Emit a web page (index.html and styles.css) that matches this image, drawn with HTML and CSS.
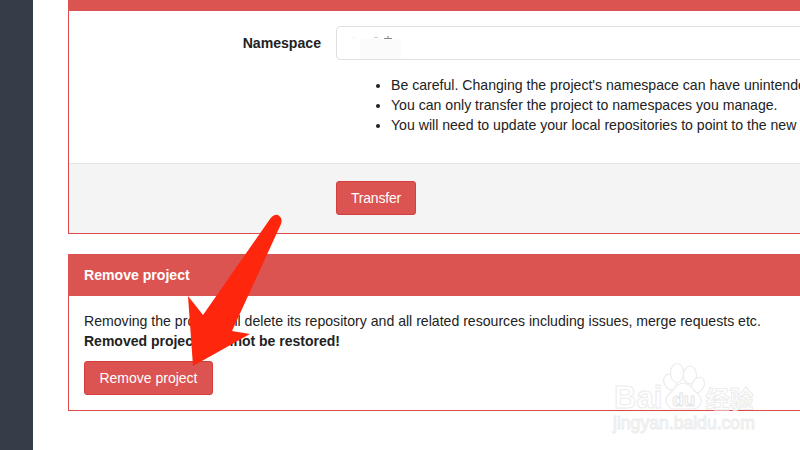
FILE: index.html
```html
<!DOCTYPE html>
<html lang="en">
<head>
<meta charset="utf-8">
<title>Remove project</title>
<link rel="stylesheet" href="styles.css">
</head>
<body>
<div class="page">
  <aside class="sidebar"></aside>
  <main class="content">
    <section class="panel transfer">
      <div class="panel-head stub"></div>
      <div class="form-row">
        <label class="ns-label">Namespace</label>
        <div class="ns-field">
          <div class="ns-input"><span class="smudge"></span></div>
          <ul class="notes">
            <li>Be careful. Changing the project's namespace can have unintended side effects.</li>
            <li>You can only transfer the project to namespaces you manage.</li>
            <li>You will need to update your local repositories to point to the new location.</li>
          </ul>
        </div>
      </div>
      <div class="actions">
        <button class="btn btn-transfer">Transfer</button>
      </div>
    </section>
    <section class="panel remove">
      <div class="panel-head">Remove project</div>
      <div class="panel-body">
        <p class="msg">Removing the project will delete its repository and all related resources including issues, merge requests etc.</p>
        <p class="msg"><strong class="warn">Removed projects cannot be restored!</strong></p>
        <button class="btn btn-remove">Remove project</button>
      </div>
    </section>
  </main>
</div>
<div class="watermark">
  <svg class="paw" width="50" height="50" viewBox="0 0 50 50" aria-hidden="true">
    <g fill="#fff" stroke="#ececec" stroke-width="1.2">
      <ellipse cx="10" cy="20" rx="6" ry="8" transform="rotate(-25 10 20)"/>
      <ellipse cx="17" cy="11" rx="6.5" ry="9.5"/>
      <ellipse cx="30" cy="13" rx="6.5" ry="9"/>
      <ellipse cx="38" cy="23" rx="6" ry="8" transform="rotate(25 38 23)"/>
      <path d="M23 21 C16 21 14 28 9 32 C3 37 7 47 15 47 L32 47 C41 47 44 38 38 32 C33 28 30 21 23 21 Z"/>
    </g>
  </svg>
  <div class="wm-main"><span>Bai</span><span class="wm-du">du</span><span class="wm-cn">经验</span></div>
  <div class="wm-url">jingyan.baidu.com</div>
</div>
<svg class="arrow" width="800" height="450" viewBox="0 0 800 450" aria-hidden="true">
  <path fill="#fe260c" d="M188 296 L203 315 L270 219 Q274 214 278 215 Q283 218 281 224 L232 331 L250 334 L193 366 Z"/>
</svg>
</body>
</html>
```

FILE: styles.css
```css
* { box-sizing: border-box; }
html, body {
  margin: 0;
  height: 100%;
  overflow: hidden;
  background: #fff;
  font-family: "Liberation Sans", Arial, sans-serif;
  font-size: 14.1px;
  color: #222;
}
.page { display: flex; height: 450px; width: 800px; overflow: hidden; }
.sidebar { flex: 0 0 33px; background: #353d48; }
.content { flex: 0 0 1000px; padding-left: 35px; }
.panel { border: 1px solid #e0494a; border-top: 0; width: 965px; }
.panel-head {
  background: #db5451;
  color: #fff;
  font-weight: 700;
  height: 42px;
  line-height: 42px;
  padding-left: 16px;
  margin-left: -1px;
  margin-right: -1px;
}
.panel-head.stub { height: 11px; }
.form-row { display: flex; padding-top: 15px; height: 152px; }
.ns-label {
  flex: 0 0 252px;
  text-align: right;
  font-weight: 700;
  line-height: 34px;
}
.ns-field { margin-left: 15px; flex: 1; }
.ns-input {
  height: 34px;
  border: 1px solid #e0e0e0;
  border-radius: 4px;
  background-color: #fff;
  background-image:
    linear-gradient(#ddd, #ddd),
    linear-gradient(#ccc, #ccc),
    linear-gradient(#8a8a8a, #8a8a8a),
    linear-gradient(#bbb, #bbb);
  background-repeat: no-repeat;
  background-size: 1px 1px, 4px 1px, 8px 1px, 2px 2px;
  background-position: 16px 10px, 37px 10px, 47px 11px, 50px 9px;
  display: flex;
  align-items: flex-end;
  padding-left: 23px;
}
.smudge {
  width: 41px;
  height: 20px;
  background: #fbfbfb;
}
.notes { margin: 15px 0 0; padding-left: 55px; line-height: 20px; white-space: nowrap; }
.actions {
  background: #f4f4f4;
  border-top: 1px solid #e5e5e5;
  height: 70px;
  padding: 17px 0 0 267px;
}
.btn {
  font: 14px "Liberation Sans", Arial, sans-serif;
  color: #fff;
  background: #db5451;
  border: 1px solid #d43f3d;
  border-radius: 3px;
  height: 34px;
  padding: 0;
}
.btn-transfer { width: 80px; letter-spacing: -0.2px; }
.remove { margin-top: 20px; height: 157px; }
.panel-body { padding: 15px 15px 0; }
.msg { margin: 0; line-height: 20px; }
.warn { font-size: 14px; }
.btn-remove { margin-top: 10px; width: 129px; }
.arrow { position: absolute; left: 0; top: 0; pointer-events: none; }
.watermark {
  position: absolute;
  left: 612px;
  top: 362px;
  width: 150px;
  height: 80px;
  color: #fff;
  -webkit-text-stroke: 1px #ececec;
  font-family: "Liberation Sans", Arial, sans-serif;
}
.paw { position: absolute; left: 48px; top: 0; }
.wm-main {
  position: absolute;
  left: 2px;
  top: 18px;
  display: flex;
  align-items: baseline;
  font-size: 31px;
  font-weight: 700;
  line-height: 36px;
  white-space: nowrap;
}
.wm-du {
  font-size: 19px;
  margin: 0 10px;
  position: relative;
  top: -2px;
  -webkit-text-stroke-color: #e4e4e4;
}
.wm-cn { font-family: "Noto Sans CJK SC", sans-serif; font-size: 24px; }
.wm-url {
  position: absolute;
  left: 1px;
  top: 51px;
  font-size: 17.6px;
  white-space: nowrap;
  font-weight: 400;
}
```
